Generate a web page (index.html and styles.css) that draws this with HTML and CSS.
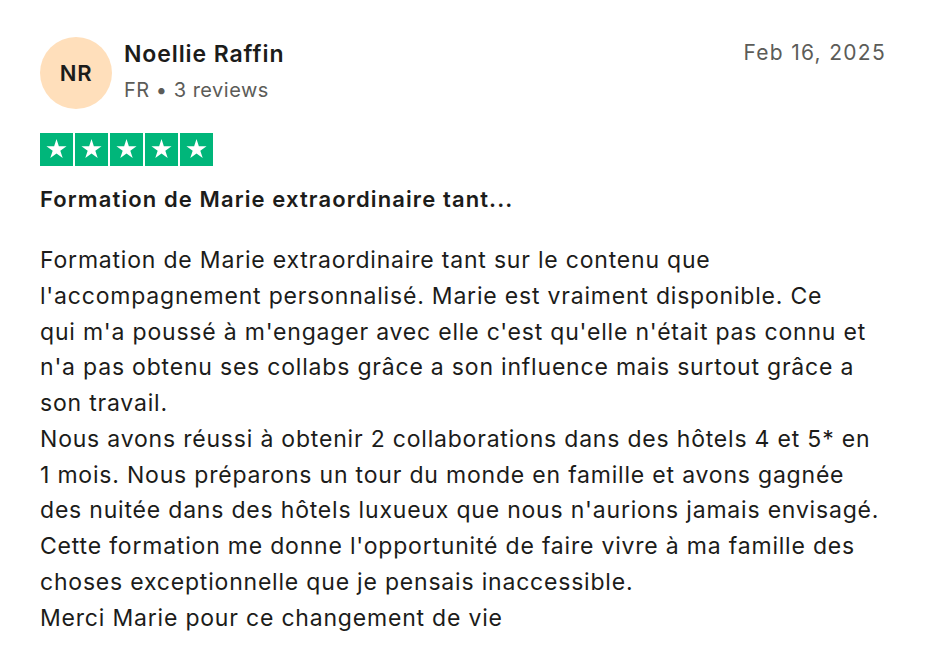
FILE: index.html
```html
<!DOCTYPE html>
<html lang="fr">
<head>
<meta charset="utf-8">
<title>Review</title>
<link rel="stylesheet" href="styles.css">
</head>
<body>
<article class="review">
  <header class="review-head">
    <div class="avatar">NR</div>
    <div class="consumer">
      <div class="name">Noellie Raffin</div>
      <div class="meta">FR • 3 reviews</div>
    </div>
    <time class="date">Feb 16, 2025</time>
  </header>
  <div class="stars">
    <span class="star"><svg viewBox="0 0 100 100"><polygon points="50,18 57.17,40.13 80.43,40.11 61.6,53.77 68.81,75.89 50,62.2 31.19,75.89 38.4,53.77 19.57,40.11 42.83,40.13" fill="#fff"/></svg></span>
    <span class="star"><svg viewBox="0 0 100 100"><polygon points="50,18 57.17,40.13 80.43,40.11 61.6,53.77 68.81,75.89 50,62.2 31.19,75.89 38.4,53.77 19.57,40.11 42.83,40.13" fill="#fff"/></svg></span>
    <span class="star"><svg viewBox="0 0 100 100"><polygon points="50,18 57.17,40.13 80.43,40.11 61.6,53.77 68.81,75.89 50,62.2 31.19,75.89 38.4,53.77 19.57,40.11 42.83,40.13" fill="#fff"/></svg></span>
    <span class="star"><svg viewBox="0 0 100 100"><polygon points="50,18 57.17,40.13 80.43,40.11 61.6,53.77 68.81,75.89 50,62.2 31.19,75.89 38.4,53.77 19.57,40.11 42.83,40.13" fill="#fff"/></svg></span>
    <span class="star"><svg viewBox="0 0 100 100"><polygon points="50,18 57.17,40.13 80.43,40.11 61.6,53.77 68.81,75.89 50,62.2 31.19,75.89 38.4,53.77 19.57,40.11 42.83,40.13" fill="#fff"/></svg></span>
  </div>
  <h2 class="title">Formation de Marie extraordinaire tant...</h2>
  <p class="text">Formation de Marie extraordinaire tant sur le contenu que<br>l'accompagnement personnalisé. Marie est vraiment disponible. Ce<br>qui m'a poussé à m'engager avec elle c'est qu'elle n'était pas connu et<br>n'a pas obtenu ses collabs grâce a son influence mais surtout grâce a<br>son travail.<br>Nous avons réussi à obtenir 2 collaborations dans des hôtels 4 et 5* en<br>1 mois. Nous préparons un tour du monde en famille et avons gagnée<br>des nuitée dans des hôtels luxueux que nous n'aurions jamais envisagé.<br>Cette formation me donne l'opportunité de faire vivre à ma famille des<br>choses exceptionnelle que je pensais inaccessible.<br>Merci Marie pour ce changement de vie</p>
</article>
</body>
</html>
```
FILE: styles.css
```css
html, body {
  margin: 0;
  padding: 0;
  background: #ffffff;
}
body {
  font-family: "Inter", "Noto Sans", sans-serif;
  color: #1c1c1a;
}
.review {
  padding: 37px 60px 0 40px;
}
.review-head {
  display: flex;
  align-items: flex-start;
}
.avatar {
  width: 72px;
  height: 72px;
  border-radius: 50%;
  background: #ffdfbb;
  display: flex;
  align-items: center;
  justify-content: center;
  font-size: 22px;
  letter-spacing: 0.8px;
  font-weight: 600;
  color: #1c1c1a;
  flex-shrink: 0;
}
.consumer {
  margin-left: 12px;
  padding-top: 2px;
  flex: 1;
}
.name {
  font-size: 23px;
  line-height: 30px;
  letter-spacing: 0.9px;
  font-weight: 600;
}
.meta {
  margin-top: 7px;
  font-size: 20px;
  line-height: 28px;
  letter-spacing: 0.5px;
  color: #5c5c58;
}
.date {
  font-size: 21px;
  line-height: 28px;
  letter-spacing: 1.3px;
  color: #5c5c58;
  padding-top: 2px;
}
.stars {
  display: flex;
  gap: 2px;
  margin-top: 24px;
}
.star {
  width: 33px;
  height: 33px;
  background: #00b67a;
  display: flex;
}
.star svg {
  width: 33px;
  height: 33px;
}
.title {
  margin: 19px 0 0;
  font-size: 22px;
  line-height: 28px;
  letter-spacing: 1.1px;
  font-weight: 600;
}
.text {
  margin: 30px 0 0;
  font-size: 23px;
  line-height: 35.75px;
  letter-spacing: 0.8px;
  white-space: nowrap;
}
```
